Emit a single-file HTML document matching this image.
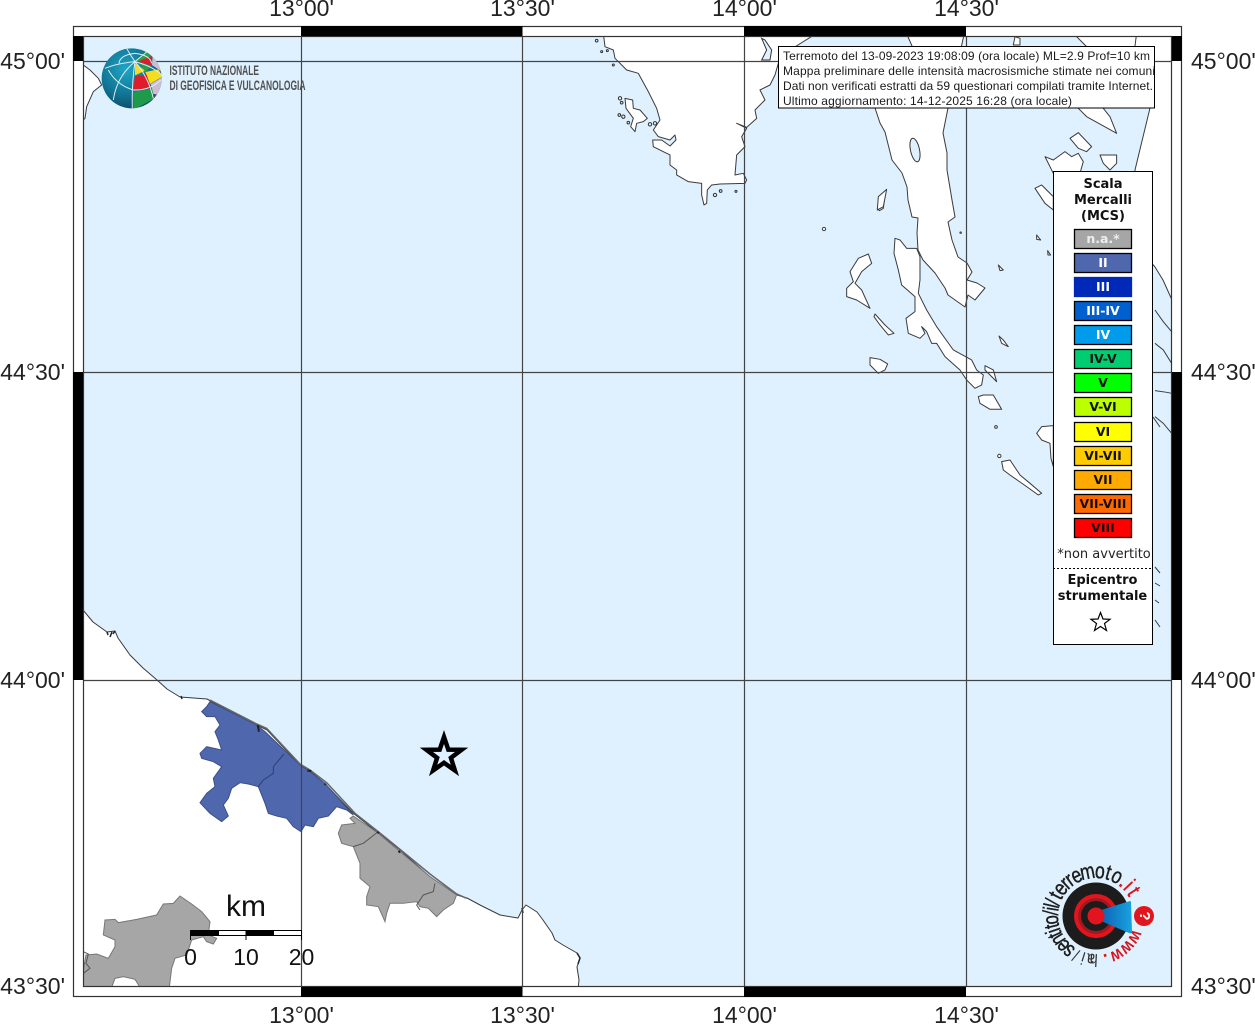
<!DOCTYPE html>
<html><head><meta charset="utf-8"><style>
html,body{margin:0;padding:0;background:#fff}
svg{display:block}
.c{fill:#fff;stroke:#3a3a3a;stroke-width:1;vector-effect:non-scaling-stroke;stroke-linejoin:round}
.c *{vector-effect:non-scaling-stroke}
.lab{font:23px "Liberation Sans",sans-serif;fill:#222}
.sw{stroke:#000;stroke-width:1.3}
.st{font:bold 12.5px "DejaVu Sans",sans-serif;text-anchor:middle}
.lt{font:bold 13px "DejaVu Sans",sans-serif;text-anchor:middle;fill:#111}
.it{font:12px "Liberation Sans",sans-serif;fill:#1a1a1a}
.k{font:22px "Liberation Sans",sans-serif;text-anchor:middle;fill:#1c1c1c;stroke:#1c1c1c;stroke-width:.4}
.e{font:22px "Liberation Sans",sans-serif;text-anchor:middle;fill:#d8141e;stroke:#d8141e;stroke-width:.4}
.r{font:bold 18px "Liberation Sans",sans-serif;text-anchor:middle;fill:#d8141e}
.h{font:18px "Liberation Sans",sans-serif;text-anchor:middle;fill:#333}
</style></head><body>
<svg width="1255" height="1024" viewBox="0 0 1255 1024" xmlns="http://www.w3.org/2000/svg">
<defs>
<clipPath id="map"><rect x="83" y="36" width="1089" height="951"/></clipPath>
<clipPath id="ib"><rect x="779" y="47" width="375" height="61"/></clipPath>
<radialGradient id="gl" cx="40%" cy="35%" r="70%"><stop offset="0" stop-color="#1fa6c6"/><stop offset=".65" stop-color="#10708f"/><stop offset="1" stop-color="#0b4a63"/></radialGradient>
<linearGradient id="cone" x1="0" x2="1" y1="0" y2="0"><stop offset="0" stop-color="#0b63b5"/><stop offset="1" stop-color="#1aa3e0"/></linearGradient>
<clipPath id="glc"><circle cx="185" cy="175" r="90"/></clipPath>
</defs>

<rect x="83" y="36" width="1089" height="951" fill="#dff1ff"/>

<g clip-path="url(#map)">
<!-- south coast -->
<path class="c" d="M83 610L93 622L107 632L115 631L118 638L130 655L143 668L157 680L167 689L180 697L207 699L227 710L257 725L267 730L300 765L310 771L323 782L353 813L377 832L400 850L430 877L457 895L467 898L480 905L500 915L518 918L522 910L526 905L537 912L543 920L552 933L555 940L563 945L577 953L580 958L577 967L579 980L578 990L83 990Z"/>
<path d="M107 632L108 635M112 632L110 637M115 631L113 634M181 696L182 699M522 908L523 913M577 953L580 958L578 964" stroke="#222" stroke-width="1.500" fill="none"/>
<!-- blue region -->
<g transform="translate(190 690) scale(.3333)">
<path fill="#4f67ad" stroke="#3d4f88" stroke-width="1" vector-effect="non-scaling-stroke" d="M60 35L200 105L225 125L330 225L360 245L405 280L490 375L470 360L440 350L415 378L385 385L370 410L345 405L333 425L310 410L290 385L260 378L235 370L225 340L205 290L175 282L150 278L125 295L115 325L100 345L115 378L95 395L60 370L30 338L50 310L75 290L70 265L95 230L70 215L35 205L30 190L50 170L95 180L85 150L75 125L90 105L75 80L50 80L35 65L50 50Z"/>
<path fill="none" stroke="#2f3f70" stroke-width="1" vector-effect="non-scaling-stroke" d="M282 192L250 230L250 250L220 270L205 290"/>
<path fill="#a6a6a6" stroke="#777" stroke-width="1" vector-effect="non-scaling-stroke" d="M490 378L565 430L630 485L720 560L800 615L790 640L760 660L740 680L715 655L690 650L680 635L640 640L600 640L590 670L585 695L565 650L530 645L530 620L540 590L510 565L510 520L490 470L455 460L445 430L455 405L495 400L480 385Z"/>
<path fill="none" stroke="#555" stroke-width="1" vector-effect="non-scaling-stroke" d="M565 425L520 460L490 470M735 580L730 605L700 615L680 645L690 660"/>
<path fill="none" stroke="#666" stroke-width="1.500" vector-effect="non-scaling-stroke" d="M60 30L200 102L230 115L330 222L360 240L410 278L495 370L565 425L630 478L720 552L800 612L830 625"/>
<path fill="none" stroke="#222" stroke-width="2" vector-effect="non-scaling-stroke" d="M203 105L207 125M352 242L364 243M403 282L408 284M562 426L567 429M626 482L630 488"/>
</g>
<!-- SW gray -->
<g transform="translate(70 880) scale(.3333)">
<path fill="#a6a6a6" stroke="#777" stroke-width="1" vector-effect="non-scaling-stroke" d="M330 48L365 72L395 95L420 125L415 165L440 175L430 192L410 185L400 170L365 180L350 225L315 235L305 265L298 322L210 322L195 298L160 290L135 295L125 322L40 322L40 270L48 225L80 222L115 235L135 200L135 180L100 165L105 120L135 118L145 128L200 118L260 105L280 72L310 70Z"/>
<path fill="none" stroke="#555" stroke-width="1" vector-effect="non-scaling-stroke" d="M40 215L55 222L48 250L60 265L40 280"/>
</g>
<!-- NW corner land -->
<g transform="translate(70 20) scale(.3333)">
<path class="c" d="M30 130L40 135L60 150L85 175L95 195L70 215L50 260L45 295L30 310Z"/>
</g>
<!-- Istria -->
<g transform="translate(590 30) scale(.3333)">
<path class="c" d="M40 10L45 50L70 60L75 85L110 120L145 130L175 185L200 235L210 270L190 300L205 320L240 330L255 315L258 330L240 348L215 330L188 330L190 350L220 365L240 375L240 405L260 420L260 435L295 455L335 460L335 495L342 525L350 520L352 480L365 465L390 462L465 460L470 450L460 430L435 435L440 375L465 350L455 320L470 295L440 280L470 292L500 265L495 240L525 210L510 180L540 165L555 135L565 100L600 60L680 10Z"/>
<path fill="#dff1ff" stroke="#333" stroke-width="1" vector-effect="non-scaling-stroke" d="M515 25L525 30L545 60L540 90L515 90L530 60Z"/>
<path class="c" d="M105 205L128 210L130 235L150 240L172 265L160 275L140 280L135 305L122 290L130 265L108 235Z"/>
<g fill="#dff1ff" stroke="#333" stroke-width="1">
<circle cx="90" cy="205" r="5" vector-effect="non-scaling-stroke"/><circle cx="95" cy="218" r="4" vector-effect="non-scaling-stroke"/><circle cx="88" cy="255" r="4" vector-effect="non-scaling-stroke"/><circle cx="100" cy="260" r="5" vector-effect="non-scaling-stroke"/><circle cx="115" cy="278" r="4" vector-effect="non-scaling-stroke"/><circle cx="180" cy="283" r="5" vector-effect="non-scaling-stroke"/><circle cx="195" cy="280" r="5" vector-effect="non-scaling-stroke"/><circle cx="375" cy="495" r="5" vector-effect="non-scaling-stroke"/><circle cx="392" cy="483" r="4" vector-effect="non-scaling-stroke"/><circle cx="20" cy="32" r="4" vector-effect="non-scaling-stroke"/><circle cx="35" cy="65" r="3" vector-effect="non-scaling-stroke"/><circle cx="52" cy="62" r="3" vector-effect="non-scaling-stroke"/><circle cx="70" cy="105" r="3" vector-effect="non-scaling-stroke"/><circle cx="438" cy="484" r="3" vector-effect="non-scaling-stroke"/>
</g>
</g>
<!-- Cres -->
<path class="c" d="M905 30L912 46L875 108L880 123L885 132L892 160L902 173L907 187L908 200L912 217L918 218L917 233L918 250L923 260L935 273L945 288L948 295L965 307L968 295L975 300L985 288L977 283L967 280L972 272L967 263L958 257L952 240L948 222L955 217L952 200L947 170L947 153L943 133L948 108L965 30Z"/>
<ellipse cx="915" cy="150" rx="4.500" ry="12" transform="rotate(-12 915 150)" fill="#dff1ff" stroke="#333"/>
<g transform="translate(820 200) scale(.3333)">
<path class="c" d="M225 115L240 120L260 145L290 145L300 170L300 240L295 280L320 330L350 380L400 450L455 480L470 510L490 525L485 555L465 565L440 540L420 510L375 470L350 430L335 430L320 395L305 380L315 400L300 415L265 400L258 355L285 335L285 290L245 255L235 210L222 160Z"/>
<path class="c" d="M490 585L520 585L545 628L510 628L480 610L475 590Z"/>
<path class="c" d="M145 162L155 190L125 215L105 250L125 270L150 325L110 300L80 290L80 265L100 245L90 215L115 175Z"/>
<path class="c" d="M165 342L195 375L222 400L205 405L180 375L162 350Z"/>
<path class="c" d="M150 473L180 478L203 492L195 510L175 520L150 495Z"/>
<path class="c" d="M495 497L520 510L530 545L515 530L495 510Z"/>
<path class="c" d="M537 408L550 420L565 440L545 430Z"/>
<path class="c" d="M535 195L550 210L540 212Z"/>
<path class="c" d="M650 105L662 120L650 118Z"/>
<path class="c" d="M683 152L692 165L684 165Z"/>
<circle class="c" cx="12" cy="87" r="5"/><circle cx="422" cy="98" r="4" fill="#555"/><circle class="c" cx="528" cy="681" r="4"/><circle class="c" cx="538" cy="768" r="5"/>
<path class="c" d="M700 677L665 680L650 700L665 720L690 730L693 775L700 800Z"/>
<path class="c" d="M545 785L570 780L600 825L630 850L665 880L655 885L620 860L570 825L550 810Z"/>
<path class="c" d="M172 25L180 0L195 -15L190 25L178 32Z"/>
<path class="c" d="M665 -5L695 20L700 30L700 -5Z"/>
</g>
<g transform="translate(770 20) scale(.3333)">
<path class="c" d="M322 570L325 530L350 508L340 560Z"/>
<path class="c" d="M900 355L925 338L965 380L950 395L925 385Z"/>
<path class="c" d="M825 410L850 420L885 395L905 410L925 400L940 425L930 460L850 460Z"/>
<path class="c" d="M990 405L1040 405L1040 430L1020 450L1000 430Z"/>
<path class="c" d="M795 505L815 495L850 530L850 570L825 550Z"/>
<path class="c" d="M910 40L960 90L925 265L950 290L1040 340L1020 290L1000 265L1100 80L1100 40Z"/>
<path class="c" d="M735 50L750 55L750 75L730 75Z"/>
</g>
<!-- mainland NE -->
<path class="c" d="M1137 30L1135 46L1150 108L1135 170L1140 250L1155 267L1163 280L1172 300L1180 300L1180 30Z"/>
<!-- coast strokes east of legend -->
<g transform="translate(820 200) scale(.3333)" fill="none" stroke="#3a3a3a" stroke-width="1">
<path vector-effect="non-scaling-stroke" d="M1005 330L1030 365L1055 395M1005 430L1030 450L1055 490M1005 572L1040 577L1055 580M1005 650L1030 670L1055 700"/>
</g>
<path d="M1153 417L1160 427M1155 567L1160 573M1155 583L1160 586M1155 600L1159 603M1155 620L1160 627" fill="none" stroke="#3a3a3a"/>
<!-- grid -->
<g stroke="#444" stroke-width="1.200" fill="none">
<path d="M301.500 36V987M522.500 36V987M744.500 36V987M966.500 36V987M83 61.500H1172M83 372.500H1172M83 680.500H1172"/>
</g>
</g>

<!-- frame -->
<g>
<rect x="73.500" y="26.500" width="1108" height="970" fill="none" stroke="#333" stroke-width="1.200"/>
<rect x="83.500" y="36.500" width="1088" height="950" fill="none" stroke="#333" stroke-width="1.200"/>
<path d="M301 26h221.500v10H301zM744 26h222v10H744zM301 987h221.500v10H301zM744 987h222v10H744zM73 36h10v25H73zM73 372h10v308H73zM1172 36h10v25h-10zM1172 372h10v308h-10z" fill="#000"/>
</g>

<!-- labels -->
<g class="lab" text-anchor="middle">
<text x="301.500" y="16">13°00'</text><text x="522.500" y="16">13°30'</text><text x="744.500" y="16">14°00'</text><text x="966.500" y="16">14°30'</text>
<text x="301.500" y="1023">13°00'</text><text x="522.500" y="1023">13°30'</text><text x="744.500" y="1023">14°00'</text><text x="966.500" y="1023">14°30'</text>
</g>
<g class="lab" text-anchor="end"><text x="65" y="69">45°00'</text><text x="65" y="380">44°30'</text><text x="65" y="688">44°00'</text><text x="65" y="994">43°30'</text></g>
<g class="lab"><text x="1191" y="69">45°00'</text><text x="1191" y="380">44°30'</text><text x="1191" y="688">44°00'</text><text x="1191" y="994">43°30'</text></g>

<!-- star -->
<path d="M444 737L448.300 749.600L461.600 749.800L450.900 757.800L454.900 770.500L444 762.800L433.100 770.500L437.100 757.800L426.400 749.800L439.700 749.600Z" fill="#dff1ff" stroke="#000" stroke-width="4.500" stroke-linejoin="miter" stroke-miterlimit="10"/>

<!-- scale bar -->
<g>
<rect x="190.500" y="930.500" width="111" height="5" fill="#fff" stroke="#000"/>
<rect x="191" y="931" width="28" height="4.500" fill="#000"/><rect x="246" y="931" width="28" height="4.500" fill="#000"/>
<path d="M190.500 930v10M246 930v10M301.500 930v10" stroke="#000"/>
<g font-family="Liberation Sans,sans-serif" fill="#111" text-anchor="middle"><text x="246" y="916" font-size="30">km</text><text x="190.500" y="965" font-size="23">0</text><text x="246" y="965" font-size="23">10</text><text x="301.500" y="965" font-size="23">20</text></g>
</g>

<!-- INGV logo -->
<g transform="translate(70 20) scale(.3333)">
<circle cx="185" cy="175" r="90" fill="url(#gl)"/>
<g clip-path="url(#glc)">
<path d="M200 122L235 90L250 108L205 125Z" fill="#2e9e44"/>
<path d="M200 126L245 108L246 137L215 128Z" fill="#df1c2c"/>
<path d="M248 105L280 160L268 150L246 135Z" fill="#cdbdd4"/>
<path d="M195 130L226 152L195 166Z" fill="#f5dc1d"/>
<path d="M207 128L244 137L226 156Z" fill="#2e9e44"/>
<path d="M226 156L265 148L278 170L240 192Z" fill="#f5dc1d"/>
<path d="M195 167L230 164L242 205L190 212Z" fill="#df1c2c"/>
<path d="M242 192L280 170L272 225L250 222Z" fill="#cdbdd4"/>
<path d="M190 216L246 206L252 236L190 270Z" fill="#1f9a4a"/>
<path d="M254 225L270 222L254 245Z" fill="#df1c2c"/>
<g fill="none" stroke="#dcecf0" stroke-width="1">
<path vector-effect="non-scaling-stroke" d="M195 125Q178 100 170 85M195 125Q140 130 105 145M195 125Q140 170 130 240M195 125Q185 190 187 265M195 125Q235 170 250 235M195 125Q250 140 275 165M195 125L235 92"/>
<path vector-effect="non-scaling-stroke" d="M147 130Q150 105 195 100Q240 105 245 130M115 150Q140 195 190 210Q240 212 272 180"/>
</g></g>
</g>
<g font-family="Liberation Sans Narrow,Liberation Sans,sans-serif" fill="#505050" font-size="14" font-weight="bold">
<text x="169.500" y="75" textLength="89.500" lengthAdjust="spacingAndGlyphs">ISTITUTO NAZIONALE</text>
<text x="169.500" y="90" textLength="136" lengthAdjust="spacingAndGlyphs">DI GEOFISICA E VULCANOLOGIA</text>
</g>

<!-- info box -->
<rect x="778.500" y="46.500" width="376" height="61.500" fill="#fff" stroke="#000"/>
<g clip-path="url(#ib)" class="it">
<text x="783" y="60" textLength="367">Terremoto del 13-09-2023 19:08:09 (ora locale) ML=2.9 Prof=10 km</text>
<text x="783" y="75" textLength="372">Mappa preliminare delle intensità macrosismiche stimate nei comuni</text>
<text x="783" y="90" textLength="370">Dati non verificati estratti da 59 questionari compilati tramite Internet.</text>
<text x="783" y="105" textLength="289">Ultimo aggiornamento: 14-12-2025 16:28 (ora locale)</text>
</g>

<!-- legend -->
<rect x="1053.500" y="171.500" width="99" height="473" fill="#fff" stroke="#000"/>
<text class="lt" x="1103" y="188">Scala</text><text class="lt" x="1103" y="204">Mercalli</text><text class="lt" x="1103" y="220">(MCS)</text>
<g class="sw">
<rect x="1074.500" y="229.500" width="57" height="19" fill="#a6a6a6"/>
<rect x="1074.500" y="253.500" width="57" height="19" fill="#4f67ad"/>
<rect x="1074.500" y="277.500" width="57" height="19" fill="#0029b8" stroke="#0029b8"/>
<rect x="1074.500" y="301.500" width="57" height="19" fill="#0060d0"/>
<rect x="1074.500" y="325.500" width="57" height="19" fill="#009ceb"/>
<rect x="1074.500" y="349.500" width="57" height="19" fill="#00cc70"/>
<rect x="1074.500" y="373.500" width="57" height="19" fill="#00ff00"/>
<rect x="1074.500" y="397.500" width="57" height="19" fill="#bbff00"/>
<rect x="1074.500" y="422.500" width="57" height="19" fill="#ffff00"/>
<rect x="1074.500" y="446.500" width="57" height="19" fill="#ffcc00"/>
<rect x="1074.500" y="470.500" width="57" height="19" fill="#ffaa00"/>
<rect x="1074.500" y="494.500" width="57" height="19" fill="#ff6a00"/>
<rect x="1074.500" y="518.500" width="57" height="19" fill="#ff0000"/>
</g>
<g class="st" fill="#fff">
<text x="1103" y="243" fill="#eee">n.a.*</text><text x="1103" y="267">II</text><text x="1103" y="291">III</text><text x="1103" y="315">III-IV</text><text x="1103" y="339">IV</text>
</g>
<g class="st" fill="#111">
<text x="1103" y="363">IV-V</text><text x="1103" y="387">V</text><text x="1103" y="411">V-VI</text><text x="1103" y="436">VI</text><text x="1103" y="460">VI-VII</text><text x="1103" y="484">VII</text><text x="1103" y="508">VII-VIII</text><text x="1103" y="532">VIII</text>
</g>
<text x="1104" y="558" font-family="DejaVu Sans,sans-serif" font-size="13" text-anchor="middle" fill="#222">*non avvertito</text>
<path d="M1053 568.500H1153" stroke="#000" stroke-dasharray="2 2"/>
<text class="lt" x="1102.500" y="584">Epicentro</text><text class="lt" x="1102.500" y="600">strumentale</text>
<path d="M1100.500 612.500L1103 619L1110 619.300L1104.500 623.500L1106.500 630.500L1100.500 626.500L1094.500 630.500L1096.500 623.500L1091 619.300L1098 619Z" fill="#fff" stroke="#000" stroke-width="1.200"/>

<!-- haisentito logo -->
<g>
<circle cx="1096" cy="916" r="33.500" fill="#1c1c1c"/>
<circle cx="1096" cy="916" r="22" fill="#e2151f"/>
<circle cx="1096" cy="916" r="18" fill="#a01820"/>
<circle cx="1096" cy="916" r="15" fill="#1c1c1c"/>
<path d="M1101 910L1130 901Q1131 901 1131 903L1132 931Q1132 934 1129 933L1101 921Z" fill="url(#cone)"/>
<circle cx="1096" cy="916" r="8.500" fill="#e2151f"/>
<circle cx="1144" cy="916" r="10" fill="#e2151f"/>
<text x="1144" y="916" font-family="Liberation Sans,sans-serif" font-weight="bold" font-size="15" fill="#fff" text-anchor="middle" dominant-baseline="middle" transform="rotate(90 1144 916)">?</text>
<!-- ring letters: each rotated around the disc centre, baseline r=38 -->
<g>
<text class="r" transform="rotate(118 1096 916) translate(1096 877) scale(.85 1)">w</text>
<text class="r" transform="rotate(135 1096 916) translate(1096 877) scale(.85 1)">w</text>
<text class="r" transform="rotate(152 1096 916) translate(1096 877) scale(.85 1)">w</text>
<text class="r" transform="rotate(167 1096 916) translate(1096 877)">.</text>
<text class="h" transform="rotate(183 1096 916) translate(1096 878) scale(.8 1)">h</text>
<text class="h" transform="rotate(-173 1096 916) translate(1096 878) scale(.8 1)">a</text>
<text class="h" transform="rotate(-163 1096 916) translate(1096 878) scale(.8 1)">i</text>
<text class="h" transform="rotate(-153 1096 916) translate(1096 878) scale(.8 1)">/</text>
<text class="k" transform="rotate(-142 1096 916) translate(1096 878) scale(.75 1)">s</text>
<text class="k" transform="rotate(-132 1096 916) translate(1096 878) scale(.75 1)">e</text>
<text class="k" transform="rotate(-122 1096 916) translate(1096 878) scale(.75 1)">n</text>
<text class="k" transform="rotate(-114.500 1096 916) translate(1096 878) scale(.75 1)">t</text>
<text class="k" transform="rotate(-109 1096 916) translate(1096 878) scale(.75 1)">i</text>
<text class="k" transform="rotate(-103 1096 916) translate(1096 878) scale(.75 1)">t</text>
<text class="k" transform="rotate(-95 1096 916) translate(1096 878) scale(.75 1)">o</text>
<text class="k" transform="rotate(-86 1096 916) translate(1096 878) scale(.75 1)">/</text>
<text class="k" transform="rotate(-81 1096 916) translate(1096 878) scale(.75 1)">i</text>
<text class="k" transform="rotate(-77 1096 916) translate(1096 878) scale(.75 1)">l</text>
<text class="k" transform="rotate(-72 1096 916) translate(1096 878) scale(.75 1)">/</text>
<text class="k" transform="rotate(-63 1096 916) translate(1096 878) scale(.8 1)">t</text>
<text class="k" transform="rotate(-52.500 1096 916) translate(1096 878) scale(.8 1)">e</text>
<text class="k" transform="rotate(-43 1096 916) translate(1096 878) scale(.8 1)">r</text>
<text class="k" transform="rotate(-36 1096 916) translate(1096 878) scale(.8 1)">r</text>
<text class="k" transform="rotate(-26 1096 916) translate(1096 878) scale(.8 1)">e</text>
<text class="k" transform="rotate(-11 1096 916) translate(1096 878) scale(.8 1)">m</text>
<text class="k" transform="rotate(5 1096 916) translate(1096 878) scale(.8 1)">o</text>
<text class="k" transform="rotate(16 1096 916) translate(1096 878) scale(.8 1)">t</text>
<text class="k" transform="rotate(28 1096 916) translate(1096 878) scale(.8 1)">o</text>
<text class="e" transform="rotate(39 1096 916) translate(1096 878)">.</text>
<text class="e" transform="rotate(47 1096 916) translate(1096 878) scale(.8 1)">i</text>
<text class="e" transform="rotate(57 1096 916) translate(1096 878) scale(.8 1)">t</text>
</g>
</g>
</svg>
</body></html>
